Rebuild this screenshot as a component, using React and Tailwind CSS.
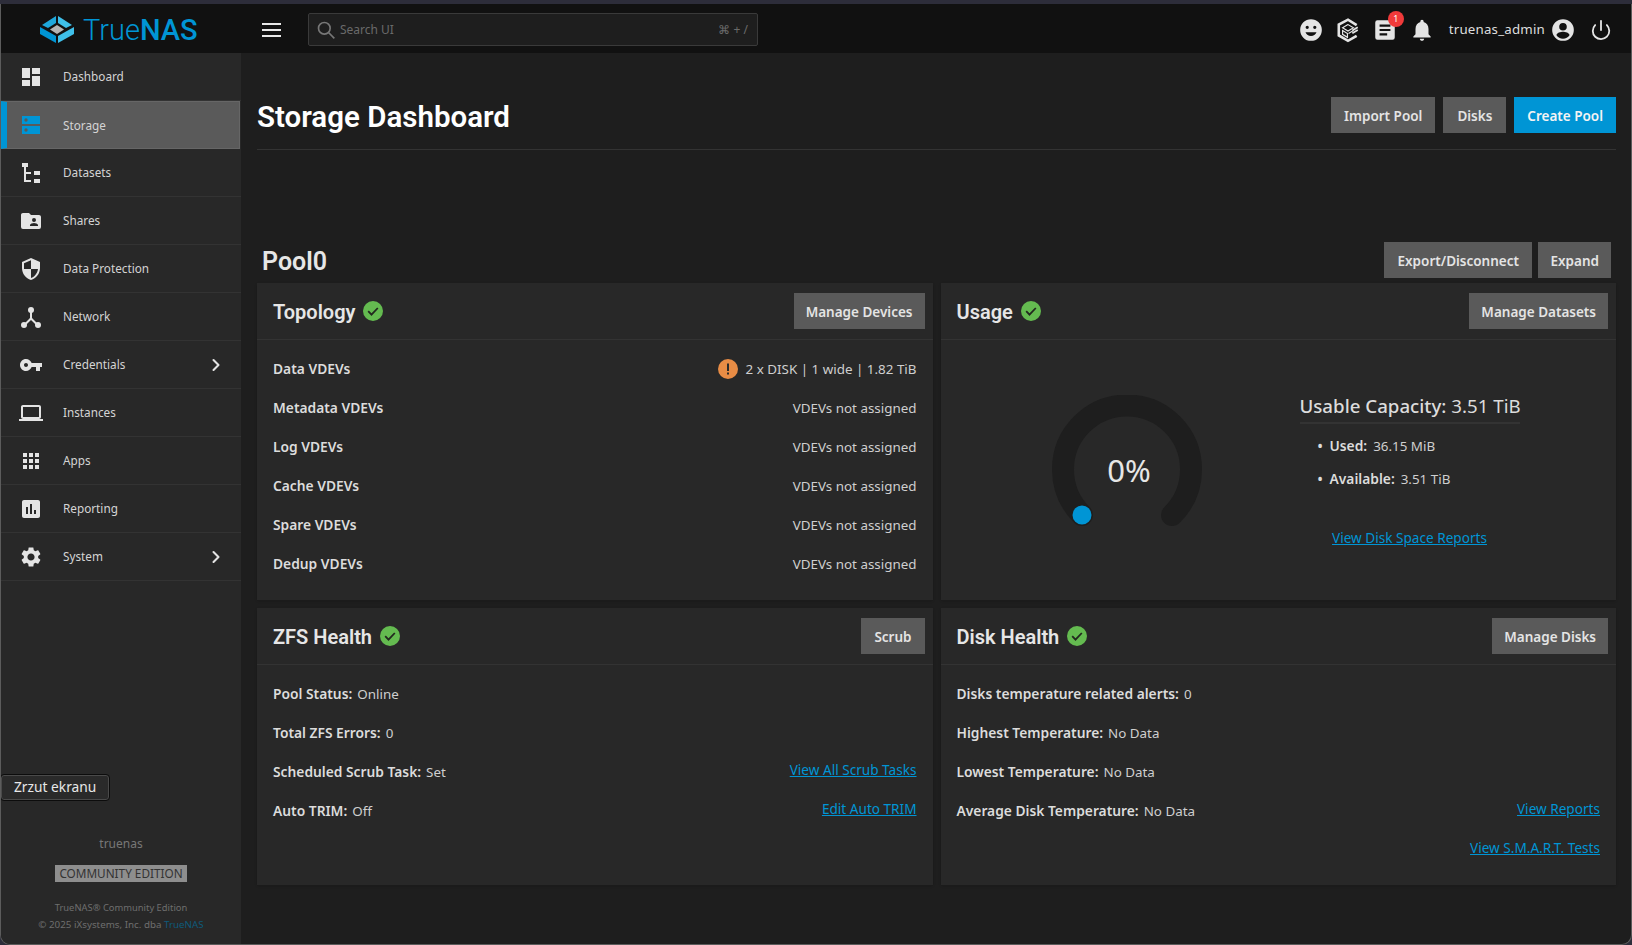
import React from "react";
import { ChevronRight, Power } from "lucide-react";

const body = "font-['Noto_Sans',sans-serif]";
const head = "font-['Roboto',sans-serif]";

const Icon = ({ d, className = "text-[#e4e4e4]", size = 24 }) => (
  <svg viewBox="0 0 24 24" width={size} height={size} className={className} fill="currentColor">
    <path d={d} fillRule="evenodd" />
  </svg>
);

const paths = {
  dashboard: "M3 13h8V3H3v10zm0 8h8v-6H3v6zm10 0h8V11h-8v10zm0-18v6h8V3h-8z",
  shares: "M19 17h-8v-1c0-1.33 2.67-2 4-2s4 .67 4 2v1zM15 9a2 2 0 110 4 2 2 0 010-4zM20 6h-8l-2-2H4c-1.11 0-2 .89-2 2v12a2 2 0 002 2h16a2 2 0 002-2V8c0-1.11-.9-2-2-2z",
  shield: "M12 1L3 5v6c0 5.55 3.84 10.74 9 12 5.16-1.26 9-6.45 9-12V5l-9-4zm0 10.99h7c-.53 4.12-3.28 7.79-7 8.94V12H5V6.3l7-3.11v8.8z",
  key: "M12.65 10C11.83 7.67 9.61 6 7 6c-3.31 0-6 2.69-6 6s2.69 6 6 6c2.61 0 4.83-1.67 5.65-4H17v4h4v-4h2v-4H12.65zM7 14c-1.1 0-2-.9-2-2s.9-2 2-2 2 .9 2 2-.9 2-2 2z",
  laptop: "M20 18c1.1 0 1.99-.9 1.99-2L22 6c0-1.1-.9-2-2-2H4c-1.1 0-2 .9-2 2v10c0 1.1.9 2 2 2H0v2h24v-2h-4zM4 6h16v10H4V6z",
  apps: "M4 8h4V4H4v4zm6 12h4v-4h-4v4zm-6 0h4v-4H4v4zm0-6h4v-4H4v4zm6 0h4v-4h-4v4zm6-10v4h4V4h-4zm-6 4h4V4h-4v4zm6 6h4v-4h-4v4zm0 6h4v-4h-4v4z",
  report: "M19 3H5c-1.1 0-2 .9-2 2v14c0 1.1.9 2 2 2h14c1.1 0 2-.9 2-2V5c0-1.1-.9-2-2-2zM9 17H7v-7h2v7zm4 0h-2V7h2v10zm4 0h-2v-4h2v4z",
  gear: "M19.14 12.94c.04-.3.06-.61.06-.94 0-.32-.02-.64-.07-.94l2.03-1.58c.18-.14.23-.41.12-.61l-1.92-3.32c-.12-.22-.37-.29-.59-.22l-2.39.96c-.5-.38-1.03-.7-1.62-.94l-.36-2.54c-.04-.24-.24-.41-.48-.41h-3.84c-.24 0-.43.17-.47.41l-.36 2.54c-.59.24-1.13.57-1.62.94l-2.39-.96c-.22-.08-.47 0-.59.22L2.74 8.87c-.12.21-.08.47.12.61l2.03 1.58c-.05.3-.09.63-.09.94s.02.64.07.94l-2.03 1.58c-.18.14-.23.41-.12.61l1.92 3.32c.12.22.37.29.59.22l2.39-.96c.5.38 1.03.7 1.62.94l.36 2.54c.05.24.24.41.48.41h3.84c.24 0 .44-.17.47-.41l.36-2.54c.59-.24 1.13-.56 1.62-.94l2.39.96c.22.08.47 0 .59-.22l1.92-3.32c.12-.22.07-.47-.12-.61l-2.01-1.58zM12 15.6c-1.98 0-3.6-1.62-3.6-3.6s1.62-3.6 3.6-3.6 3.6 1.62 3.6 3.6-1.62 3.6-3.6 3.6z",
  smile: "M12 2a10 10 0 100 20 10 10 0 000-20zM8.5 8a1.5 1.5 0 110 3 1.5 1.5 0 010-3zm7 0a1.5 1.5 0 110 3 1.5 1.5 0 010-3zM12 17.5c-2.33 0-4.3-1.46-5.1-3.5h10.2c-.8 2.04-2.77 3.5-5.1 3.5z",
  bell: "M12 22c1.1 0 2-.9 2-2h-4c0 1.1.9 2 2 2zm6-6v-5c0-3.07-1.63-5.64-4.5-6.32V4c0-.83-.67-1.5-1.5-1.5s-1.5.67-1.5 1.5v.68C7.64 5.36 6 7.92 6 11v5l-2 2v1h16v-1l-2-2z",
  account: "M12 2a10 10 0 100 20 10 10 0 000-20zm0 3.5a3.5 3.5 0 110 7 3.5 3.5 0 010-7zm0 14.5c-2.5 0-4.7-1.28-6-3.22.03-2 4-3.08 6-3.08s5.97 1.08 6 3.08A7.2 7.2 0 0112 20z",
};

const StorageIcon = () => (
  <svg viewBox="0 0 24 24" width="24" height="24" className="text-[#0095d5]" fill="currentColor">
    <rect x="3" y="3" width="18" height="8" />
    <rect x="3" y="13" width="18" height="8" />
    <circle cx="7" cy="7" r="1.7" fill="#5a5a5a" />
    <circle cx="7" cy="17" r="1.7" fill="#5a5a5a" />
  </svg>
);

const DatasetsIcon = () => (
  <svg viewBox="0 0 24 24" width="24" height="24" className="text-[#e4e4e4]" fill="currentColor">
    <rect x="3" y="2" width="6" height="4" />
    <rect x="5" y="6" width="2" height="15" />
    <rect x="5" y="11" width="7" height="2" />
    <rect x="5" y="19" width="7" height="2" />
    <rect x="15" y="10" width="6" height="4" />
    <rect x="15" y="18" width="6" height="4" />
  </svg>
);

const NetworkIcon = () => (
  <svg viewBox="0 0 24 24" width="24" height="24" className="text-[#e4e4e4]" fill="currentColor">
    <circle cx="12" cy="5" r="3" />
    <circle cx="5" cy="20" r="3" />
    <circle cx="19" cy="20" r="3" />
    <path d="M11 7h2v6l6 6-1.4 1.4L12 15l-5.6 5.4L5 19l6-6z" />
  </svg>
);

const TcIcon = () => (
  <svg viewBox="0 0 24 24" width="26" height="26" fill="none" stroke="#e4e4e4">
    <path d="M20 7.5L12 2.5 3.5 7v10l8.5 5 8-4.5" strokeWidth="2.4" />
    <path d="M12 7l-5 3 5 3 5-3zM7 12.5l4.5 2.7v3.6L7 16zM17 12.5l-4.5 2.7" strokeWidth="1.1" />
    <path d="M16 12.5l5-3M16 15l5-3" strokeWidth="1.6" />
  </svg>
);

const Logo = () => (
  <svg viewBox="0 0 34 28" width="34" height="28">
    <path d="M16 0v7l-8 5-6-3z" fill="#1fa8dc" />
    <path d="M18 0l14 9-6 3-8-5z" fill="#3fc0ea" />
    <path d="M0 11l16 9v7L0 18z" fill="#0095d5" />
    <path d="M34 11v7l-16 9v-7z" fill="#3fc0ea" />
    <path d="M17 9l7 4.5-7 4.5-7-4.5z" fill="#b4b4b4" />
  </svg>
);

const Check = () => (
  <svg viewBox="0 0 20 20" width="20" height="20" className="shrink-0">
    <circle cx="10" cy="10" r="10" fill="#64bb50" />
    <path d="M5.2 10.2l3.3 3.4 6.3-6.6" fill="none" stroke="#22281f" strokeWidth="1.8" />
  </svg>
);

const Warn = () => (
  <svg viewBox="0 0 20 20" width="20" height="20" className="shrink-0">
    <circle cx="10" cy="10" r="10" fill="#e88c45" />
    <rect x="9" y="4.5" width="2" height="7.5" fill="#2a2a2a" />
    <rect x="9" y="13.5" width="2" height="2" fill="#2a2a2a" />
  </svg>
);

const nav = [
  { label: "Dashboard", icon: <Icon d={paths.dashboard} /> },
  { label: "Storage", icon: <StorageIcon />, active: true },
  { label: "Datasets", icon: <DatasetsIcon /> },
  { label: "Shares", icon: <Icon d={paths.shares} /> },
  { label: "Data Protection", icon: <Icon d={paths.shield} /> },
  { label: "Network", icon: <NetworkIcon /> },
  { label: "Credentials", icon: <Icon d={paths.key} />, arrow: true },
  { label: "Instances", icon: <Icon d={paths.laptop} /> },
  { label: "Apps", icon: <Icon d={paths.apps} /> },
  { label: "Reporting", icon: <Icon d={paths.report} /> },
  { label: "System", icon: <Icon d={paths.gear} />, arrow: true },
];

const Btn = ({ children, primary, px = "px-3" }) => (
  <button className={`h-9 pt-[2px] ${px} text-[13.5px] font-semibold ${primary ? "bg-[#0095d5] text-[#f4f4f4]" : "bg-[#5a5a5a] text-[#e4e4e4]"}`}>
    {children}
  </button>
);

const Link = ({ children }) => (
  <a className="text-[13.6px] text-[#0095d5] underline">{children}</a>
);

const Card = ({ title, action, actionPx, children }) => (
  <section className="bg-[#282828] flex flex-col shadow-sm">
    <div className="h-[57px] shrink-0 border-b border-[#333] flex items-center justify-between pl-4 pr-2">
      <div className="flex items-center gap-2">
        <h3 className={`${head} pt-[2px] text-[20px] font-semibold text-[#e6e6e6]`}>{title}</h3>
        <Check />
      </div>
      <Btn px={actionPx}>{action}</Btn>
    </div>
    {children}
  </section>
);

const Row = ({ label, value, link }) => (
  <div className="h-[39px] flex items-center justify-between">
    <div>
      {label && <b className="text-[13.8px] font-semibold text-[#dcdcdc]">{label}:</b>}
      {value && <span className="ml-[5px] text-[13.4px] text-[#cfcfcf]">{value}</span>}
    </div>
    {link && <Link>{link}</Link>}
  </div>
);

const topology = ["Metadata VDEVs", "Log VDEVs", "Cache VDEVs", "Spare VDEVs", "Dedup VDEVs"];

const App = () => {
  return (
    <div className={`${body} w-[1632px] h-[945px] bg-[#2d2d3a] pt-1 overflow-hidden`}>
      <div className="h-[941px] flex flex-col bg-[#1e1e1e] border-x border-b border-[#5c5c5c] rounded-b-[10px] overflow-hidden">
        {/* top bar */}
        <header className="h-[49px] pt-[2px] shrink-0 bg-[#111111] flex items-center">
          <div className="w-[240px] shrink-0 flex items-center pl-[39px] gap-[9px]">
            <Logo />
            <span className={`${head} pt-[2px] text-[29px] leading-none text-[#0095d5] font-light`}>
              True<span className="font-medium">NAS</span>
            </span>
          </div>
          <button className="ml-[21px] w-[19px] flex flex-col gap-[4px]">
            <span className="h-[2px] bg-[#e8e8e8]" />
            <span className="h-[2px] bg-[#e8e8e8]" />
            <span className="h-[2px] bg-[#e8e8e8]" />
          </button>
          <div className="ml-[27px] w-[450px] h-[33px] border border-[#3a3a3a] rounded-[2px] bg-[#1e1e1e] flex items-center pl-[7px] pr-[9px] text-[12px] text-[#6a6a6a]">
            <svg viewBox="0 0 24 24" width="20" height="20" fill="none" stroke="#777" strokeWidth="2">
              <circle cx="10" cy="10" r="7" />
              <path d="M15 15l7 7" />
            </svg>
            <span className="ml-[4px] pt-px">Search UI</span>
            <span className="ml-auto">⌘ + /</span>
          </div>
          <div className="ml-auto flex items-center pr-[19px] text-[#e4e4e4]">
            <Icon d={paths.smile} size={26} />
            <span className="ml-[11px]"><TcIcon /></span>
            <div className="relative ml-[11px]">
              <svg viewBox="0 0 24 24" width="26" height="26" fill="#e4e4e4">
                <path fillRule="evenodd" d="M5 3h14a2 2 0 012 2v14a2 2 0 01-2 2H5a2 2 0 01-2-2V5a2 2 0 012-2zm2 4v2h10V7zm0 4v2h10v-2zm0 4v2h7v-2z" />
              </svg>
              <span className="absolute -top-[6px] -right-[6px] w-4 h-4 rounded-full bg-[#f03a3a] text-[9px] leading-4 text-center text-white">1</span>
            </div>
            <span className="ml-[11px]"><Icon d={paths.bell} size={26} /></span>
            <span className="ml-[14px] text-[13.3px] text-[#dedede] tracking-[0.2px]">truenas_admin</span>
            <span className="ml-[5px]"><Icon d={paths.account} size={26} /></span>
            <Power className="ml-[14px] text-[#e4e4e4]" size={22} strokeWidth={2} />
          </div>
        </header>

        <div className="flex-1 flex min-h-0">
          {/* sidebar */}
          <aside className="relative w-[240px] shrink-0 bg-[#282828] flex flex-col">
            <nav>
              {nav.map((item) => (
                <div
                  key={item.label}
                  className={`h-12 flex items-center ${item.active ? "mr-px bg-[#5a5a5a] border-l-[6px] border-l-[#0095d5] border-y border-r border-[#666] pl-[12px]" : "border-b border-[#333] pl-[18px]"}`}
                >
                  {item.icon}
                  <span className="ml-[20px] pt-px text-[11.75px] text-[#d4d4d4]">{item.label}</span>
                  {item.arrow && <ChevronRight className="ml-auto mr-[15px] text-[#e4e4e4]" size={20} strokeWidth={2.5} />}
                </div>
              ))}
            </nav>
            <div className="absolute -left-px top-[721px] h-[27px] px-[13px] flex items-center rounded-[4px] bg-[#2a2a2a] border border-[#0c0c0c] text-[13.75px] text-[#e8e8e8] shadow-[inset_0_0_0_1px_#4a4a4a]">
              Zrzut ekranu
            </div>
            <div className="mt-auto flex flex-col items-center pb-[11px] text-[#6e6e6e]">
              <span className="text-[12px] leading-4 text-[#777]">truenas</span>
              <span className="mt-[13px] h-[17px] px-1 bg-[#8e8e8e] text-[#333] text-[11.75px] leading-[17px]">COMMUNITY EDITION</span>
              <span className="mt-[18px] text-[9.4px] leading-4">TrueNAS® Community Edition</span>
              <span className="mt-px text-[9.8px] leading-4">
                © 2025 iXsystems, Inc. dba <span className="text-[#0e5a7a]">TrueNAS</span>
              </span>
            </div>
          </aside>

          {/* page */}
          <main className="flex-1 min-w-0 pl-4 pr-[15px]">
            <div className="pt-11 pb-4 border-b border-[#333] flex items-center justify-between">
              <h1 className={`${head} h-9 text-[29.5px] font-semibold leading-[40px] text-white`}>Storage Dashboard</h1>
              <div className="flex gap-2">
                <Btn px="px-[13px]">Import Pool</Btn>
                <Btn px="px-[14px]">Disks</Btn>
                <Btn primary px="px-[13px]">Create Pool</Btn>
              </div>
            </div>

            <div className="mt-[92px] mb-[5px] h-9 flex items-center justify-between pl-[5px] pr-[5px]">
              <h2 className={`${head} h-9 text-[25px] font-semibold leading-[40px] text-[#e6e6e6]`}>Pool0</h2>
              <div className="flex gap-[6px]">
                <Btn px="px-[13.5px]">Export/Disconnect</Btn>
                <Btn>Expand</Btn>
              </div>
            </div>

            <div className="grid grid-cols-2 grid-rows-[317px_277px] gap-2">
              <Card title="Topology" action="Manage Devices">
                <div className="pt-[10px] pl-4 pr-4">
                  <div className="h-[39px] flex items-center justify-between">
                    <b className="text-[13.8px] font-semibold text-[#dcdcdc]">Data VDEVs</b>
                    <span className="flex items-center gap-2 text-[13.4px] text-[#cfcfcf]"><Warn />2 x DISK | 1 wide | 1.82 TiB</span>
                  </div>
                  {topology.map((name) => (
                    <div key={name} className="h-[39px] flex items-center justify-between">
                      <b className="text-[13.8px] font-semibold text-[#dcdcdc]">{name}</b>
                      <span className="text-[13.4px] text-[#cfcfcf]">VDEVs not assigned</span>
                    </div>
                  ))}
                </div>
              </Card>

              <Card title="Usage" action="Manage Datasets">
                <div className="flex-1 flex items-center pl-[111px]">
                  <div className="relative w-[150px] h-[150px]">
                    <svg viewBox="0 0 150 150" width="150" height="150" fill="none">
                      <path d="M30 120A64 64 0 1 1 120 120" stroke="#1e1e1e" strokeWidth="22" strokeLinecap="round" />
                      <circle cx="30" cy="120" r="9.5" fill="#0095d5" />
                    </svg>
                    <span className="absolute inset-0 pl-[5px] flex items-center justify-center text-[31px] text-[#e6e6e6]">0%</span>
                  </div>
                  <div className="ml-[98px] w-[220px]">
                    <div className="h-8 border-b-2 border-[#333] text-[18.7px] leading-[28px] text-[#dcdcdc] whitespace-nowrap">
                      <b className="font-medium">Usable Capacity:</b> 3.51 TiB
                    </div>
                    <ul className="pl-[30px] mt-[6px]">
                      <li className="h-[33px] flex items-center"><b className="text-[13.8px] font-semibold text-[#dcdcdc] relative before:content-['•'] before:absolute before:-left-[12px]">Used:</b><span className="ml-[6px] text-[13.4px] text-[#cfcfcf]">36.15 MiB</span></li>
                      <li className="h-[33px] flex items-center"><b className="text-[13.8px] font-semibold text-[#dcdcdc] relative before:content-['•'] before:absolute before:-left-[12px]">Available:</b><span className="ml-[6px] text-[13.4px] text-[#cfcfcf]">3.51 TiB</span></li>
                    </ul>
                    <div className="mt-[29px] text-center"><Link>View Disk Space Reports</Link></div>
                  </div>
                </div>
              </Card>

              <Card title="ZFS Health" action="Scrub" actionPx="px-[13px]">
                <div className="pt-2 pl-4 pr-4">
                  <Row label="Pool Status" value="Online" />
                  <Row label="Total ZFS Errors" value="0" />
                  <Row label="Scheduled Scrub Task" value="Set" link="View All Scrub Tasks" />
                  <Row label="Auto TRIM" value="Off" link="Edit Auto TRIM" />
                </div>
              </Card>

              <Card title="Disk Health" action="Manage Disks">
                <div className="pt-2 pl-4 pr-4">
                  <Row label="Disks temperature related alerts" value="0" />
                  <Row label="Highest Temperature" value="No Data" />
                  <Row label="Lowest Temperature" value="No Data" />
                  <Row label="Average Disk Temperature" value="No Data" link="View Reports" />
                  <Row link="View S.M.A.R.T. Tests" />
                </div>
              </Card>
            </div>
          </main>
        </div>
      </div>
    </div>
  );
};

export default App;
